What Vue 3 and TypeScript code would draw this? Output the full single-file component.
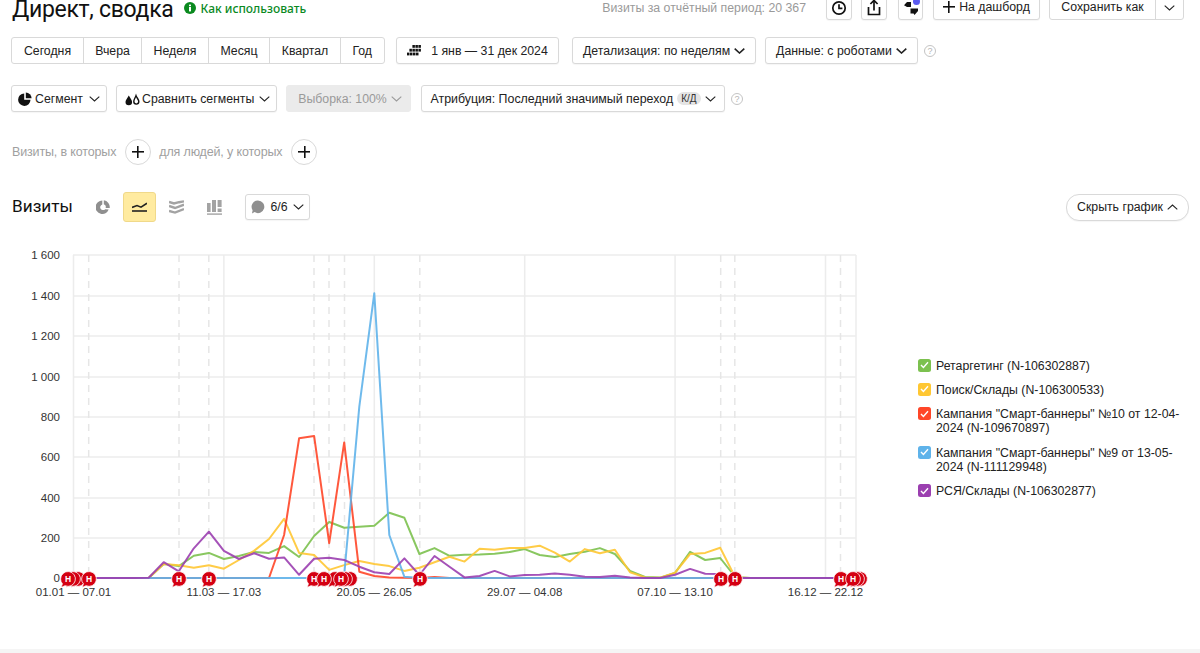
<script setup lang="ts">
interface Series { name: string; color: string; start: number; values: number[] }

const tabs = ['Сегодня', 'Вчера', 'Неделя', 'Месяц', 'Квартал', 'Год']

const series: Series[] = [
  { name: 'Ретаргетинг (N-106302887)', color: '#7cc14f', start: 6, values: [69, 59, 110, 124, 94, 109, 129, 124, 158, 104, 208, 277, 249, 254, 259, 323, 298, 119, 148, 110, 115, 116, 120, 129, 143, 114, 104, 119, 130, 148, 119, 35, 5, 2, 25, 129, 89, 99, 5] },
  { name: 'Поиск/Склады (N-106300533)', color: '#ffc733', start: 6, values: [69, 63, 51, 63, 46, 89, 134, 193, 293, 124, 114, 40, 64, 84, 69, 59, 35, 51, 78, 105, 81, 145, 140, 148, 148, 160, 125, 81, 143, 122, 140, 28, 3, 1, 26, 119, 124, 150, 3] },
  { name: 'Кампания "Смарт-баннеры" №10 от 12-04-2024 (N-109670897)', color: '#ff4628', start: 13, values: [0, 213, 691, 703, 172, 671, 31, 10, 3, 1, 0, 5, 0] },
  { name: 'Кампания "Смарт-баннеры" №9 от 13-05-2024 (N-111129948)', color: '#5fb3ea', start: 18, values: [15, 848, 1409, 213, 6, 0] },
  { name: 'РСЯ/Склады (N-106302877)', color: '#9b3fb0', start: 5, values: [1, 78, 33, 147, 229, 134, 94, 122, 95, 102, 16, 95, 100, 89, 56, 28, 20, 97, 15, 109, 56, 3, 10, 35, 8, 15, 16, 23, 16, 6, 5, 11, 3, 0, 0, 16, 45, 21, 20, 0] },
]

const X0 = 73.5
const STEP = 15.04
const BASE = 578
const SCALE = 0.2021
const WEEKS = 53

function linePoints(s: Series): string {
  const pts: string[] = []
  for (let i = 0; i < WEEKS; i++) {
    const v = i >= s.start ? s.values[i - s.start] ?? 0 : 0
    pts.push(`${(X0 + STEP * i).toFixed(1)},${(BASE - v * SCALE).toFixed(1)}`)
  }
  return pts.join(' ')
}

const yTicks = [
  { label: '1 600', y: 255 }, { label: '1 400', y: 296 }, { label: '1 200', y: 336 },
  { label: '1 000', y: 377 }, { label: '800', y: 417 }, { label: '600', y: 457 },
  { label: '400', y: 498 }, { label: '200', y: 538 }, { label: '0', y: 578 },
]
const xTicks = [
  { label: '01.01 — 07.01', x: 73.5 }, { label: '11.03 — 17.03', x: 223.9 },
  { label: '20.05 — 26.05', x: 374.3 }, { label: '29.07 — 04.08', x: 524.7 },
  { label: '07.10 — 13.10', x: 675.1 }, { label: '16.12 — 22.12', x: 825.5 },
]
const dashed = [88.7, 179, 208.8, 314, 329, 344.5, 419.8, 720.7, 734.8, 840.5]
const pins = [860, 857, 350, 345, 335, 78, 73, 68, 89, 179, 209, 314, 324, 341, 420, 721, 735, 841, 853]
const labelled = new Set([68, 89, 179, 209, 314, 324, 341, 420, 721, 735, 841, 853])
</script>

<template>
  <div class="page">
    <header class="head">
      <div class="title-wrap">
        <h1 class="title">Директ, сводка</h1>
        <span class="how">
          <svg width="12" height="12" viewBox="0 0 12 12"><circle cx="6" cy="6" r="6" fill="#0b8a1f" /><rect x="5" y="5" width="2" height="4.4" fill="#fff" /><rect x="5" y="2.6" width="2" height="1.6" fill="#fff" /></svg>
          Как использовать
        </span>
      </div>
      <div class="head-right">
        <span class="period">Визиты за отчётный период: 20 367</span>
        <button class="btn square">
          <svg width="16" height="16" viewBox="0 0 16 16" fill="none" stroke="#111" stroke-width="1.7"><circle cx="8" cy="8" r="6.2" /><path d="M8 4.2V8.4H11.4" /></svg>
        </button>
        <button class="btn square">
          <svg width="14" height="17" viewBox="0 0 14 17" fill="none" stroke="#111" stroke-width="1.7"><path d="M1.5 8V15.5H12.5V8" /><path d="M7 11.5V1.8" /><path d="M3.4 5L7 1.4L10.6 5" /></svg>
        </button>
        <button class="btn square chat">
          <svg width="14" height="14" viewBox="0 0 14 14" fill="#111"><path d="M0 4.2 L3 1 H7 V6 H3 Z" /><path d="M6.5 7.5 H14 V10 L10.5 14 L9.6 12.4 H6.5 Z" /></svg>
          <i class="dot"></i>
        </button>
        <button class="btn dash"><span class="plus-mark"></span>На дашборд</button>
        <div class="group save">
          <button class="seg save-main">Сохранить как</button>
          <button class="seg save-arrow"><svg class="chev" width="11" height="6" viewBox="0 0 11 6"><path d="M.7.7 5.5 5 10.3.7" /></svg></button>
        </div>
      </div>
    </header>

    <section class="row row-one">
      <div class="group tabs">
        <button v-for="t in tabs" :key="t" class="seg">{{ t }}</button>
      </div>
      <button class="btn date">
        <svg width="14" height="11" viewBox="0 0 14 11" fill="#111"><rect x="5.4" y="0" width="2.5" height="2.8" /><rect x="8.4" y="0" width="2.5" height="2.8" /><rect x="11.4" y="0" width="2.5" height="2.8" /><rect x="2.4" y="3.8" width="2.5" height="2.8" /><rect x="5.4" y="3.8" width="2.5" height="2.8" /><rect x="8.4" y="3.8" width="2.5" height="2.8" /><rect x="11.4" y="3.8" width="2.5" height="2.8" /><rect x="0" y="7.6" width="2.5" height="2.8" /><rect x="3" y="7.6" width="2.5" height="2.8" /><rect x="6" y="7.6" width="2.5" height="2.8" /><rect x="9" y="7.6" width="2.5" height="2.8" /></svg>
        <span>1 янв — 31 дек 2024</span>
      </button>
      <button class="btn detail">Детализация: по неделям <svg class="chev strong" width="11" height="6" viewBox="0 0 11 6"><path d="M.7.7 5.5 5 10.3.7" /></svg></button>
      <button class="btn data">Данные: с роботами <svg class="chev strong" width="11" height="6" viewBox="0 0 11 6"><path d="M.7.7 5.5 5 10.3.7" /></svg></button>
      <span class="help">?</span>
    </section>

    <section class="row row-two">
      <button class="btn seg-btn">
        <svg width="14" height="14" viewBox="0 0 14 14" fill="#111"><path d="M6.2 1.5V7.8H12.5A6.2 6.2 0 1 1 6.2 1.5Z" /><path d="M7.8 0.4A6 6 0 0 1 13.6 6.2H7.8Z" /></svg>
        <span>Сегмент</span>
        <svg class="chev wide" width="11" height="6" viewBox="0 0 11 6"><path d="M.7.7 5.5 5 10.3.7" /></svg>
      </button>
      <button class="btn compare">
        <svg width="15" height="14" viewBox="0 0 15 14"><path d="M3.8 3.4 C2.5 6 .5 7.6 .5 10 A3.3 3.3 0 0 0 7.1 10 C7.1 7.6 5.1 6 3.8 3.4Z" fill="#111" /><path d="M11 3.6 C10.2 6 8.8 7.4 8.8 9.6 A2.5 2.5 0 0 0 13.8 9.6 C13.8 7.4 11.8 6 11 3.6Z" fill="#fff" stroke="#111" stroke-width="1.4" /></svg>
        <span>Сравнить сегменты</span>
        <svg class="chev wide" width="11" height="6" viewBox="0 0 11 6"><path d="M.7.7 5.5 5 10.3.7" /></svg>
      </button>
      <button class="btn sample">Выборка: 100% <svg class="chev grey" width="11" height="6" viewBox="0 0 11 6"><path d="M.7.7 5.5 5 10.3.7" /></svg></button>
      <button class="btn attr"><span class="attr-text">Атрибуция: Последний значимый переход</span> <span class="kd">К/Д</span> <svg class="chev" width="11" height="6" viewBox="0 0 11 6"><path d="M.7.7 5.5 5 10.3.7" /></svg></button>
      <span class="help">?</span>
    </section>

    <section class="row row-three">
      <span class="cond">Визиты, в которых</span>
      <button class="round"><span class="plus-mark"></span></button>
      <span class="cond second">для людей, у которых</span>
      <button class="round"><span class="plus-mark"></span></button>
    </section>

    <section class="row row-four">
      <h2 class="metric">Визиты</h2>
      <div class="types">
        <span class="type">
          <svg width="14" height="14" viewBox="0 0 14 14" fill="#8f8f8f"><path d="M7.8 0.3A6.8 6.8 0 0 1 13.7 8H9.6A2.9 2.9 0 0 0 7.8 4.3Z" /><path d="M6.3 0.4V4.4A2.9 2.9 0 1 0 9.2 9.2L12.7 9.6A6.8 6.8 0 1 1 6.3 .4Z" /></svg>
        </span>
        <span class="type active">
          <svg width="15" height="10" viewBox="0 0 15 10" fill="none" stroke="#222" stroke-width="1.6"><path d="M0 5.4 L5 3.6 L9 5.2 L15 1.2" /><path d="M0 9H15" /></svg>
        </span>
        <span class="type">
          <svg width="15" height="14" viewBox="0 0 15 14" fill="none" stroke="#a3a3a3" stroke-width="2.4"><path d="M0 2 L5 3.5 L10 2.2 L15 1.4" /><path d="M0 6 L6 8 L15 4.6" /><path d="M0 11 L6 12.6 L15 9" /></svg>
        </span>
        <span class="type shifted">
          <svg width="15" height="15" viewBox="0 0 15 15" fill="#a3a3a3"><rect x="0" y="3" width="3.6" height="9" /><rect x="5" y="0" width="4" height="12" /><rect x="10.6" y="0" width="4" height="7" /><rect x="10.6" y="8.5" width="4" height="3.5" /><rect x="0" y="13.4" width="15" height="1.4" /></svg>
        </span>
      </div>
      <button class="btn notes">
        <svg width="14" height="14" viewBox="0 0 14 14" fill="#8f8f8f"><path d="M7 .5A6.3 6.3 0 1 1 3.6 12.1L1 13.5 1.6 10.2A6.3 6.3 0 0 1 7 .5Z" /></svg>
        6/6 <svg class="chev" width="11" height="6" viewBox="0 0 11 6"><path d="M.7.7 5.5 5 10.3.7" /></svg>
      </button>
      <button class="btn hide">Скрыть график <svg class="chev" width="11" height="6" viewBox="0 0 11 6"><path d="M.7 5.3 5.5 1 10.3 5.3" /></svg></button>
    </section>

    <section class="chart-row">
      <svg class="chart" width="900" height="380" viewBox="0 240 900 380">
        <g class="grid">
          <line v-for="t in yTicks" :key="t.label" x1="73" x2="856" :y1="t.y" :y2="t.y" />
          <line v-for="t in xTicks" :key="t.x" :x1="t.x" :x2="t.x" y1="255" y2="578" />
          <line x1="856" x2="856" y1="255" y2="578" />
        </g>
        <line v-for="d in dashed" :key="d" class="dash-line" :x1="d" :x2="d" y1="255" y2="578" />
        <text v-for="t in yTicks" :key="t.label" class="axis" x="60" :y="t.y + 4" text-anchor="end">{{ t.label }}</text>
        <text v-for="t in xTicks" :key="t.x" class="axis" :x="t.x" y="596" text-anchor="middle">{{ t.label }}</text>
        <polyline v-for="s in series" :key="s.name" class="line" :points="linePoints(s)" :stroke="s.color" />
        <g v-for="p in pins" :key="p" :transform="`translate(${p} 579)`">
          <path class="pin" d="M-7.4 0A7.4 7.4 0 1 1 -3 6.7L-7 8.6 -5.6 4.8A7.4 7.4 0 0 1 -7.4 0Z" />
          <text v-if="labelled.has(p)" class="pin-text" x="0" y="3" text-anchor="middle">Н</text>
        </g>
      </svg>
      <ul class="legend">
        <li v-for="s in series" :key="s.name">
          <span class="check" :style="{ background: s.color }">
            <svg width="9" height="8" viewBox="0 0 9 8" fill="none" stroke="#fff" stroke-width="1.4"><path d="M1 4 3.4 6.4 8 1.2" /></svg>
          </span>
          <span class="legend-name">{{ s.name }}</span>
        </li>
      </ul>
    </section>

    <div class="foot"></div>
  </div>
</template>

<style>
html, body { margin: 0; background: #fff; }
</style>

<style scoped>
.page {
  position: relative;
  height: 653px;
  overflow: hidden;
  font-family: "Liberation Sans", Arial, sans-serif;
  font-size: 12.3px;
  color: #222;
  background: #fff;
}
button { font: inherit; color: inherit; cursor: pointer; margin: 0; }
.head {
  display: flex;
  justify-content: space-between;
  height: 27px;
  margin-top: -7px;
  padding: 0 16px 0 12px;
}
.title-wrap { display: flex; align-items: flex-start; }
.title {
  margin: 3px 0 0;
  font-family: Roboto, sans-serif;
  font-size: 23px;
  font-weight: 400;
  line-height: 27px;
  letter-spacing: -.3px;
  color: #111;
}
.how {
  display: flex;
  align-items: center;
  gap: 5px;
  margin: 7px 0 0 10px;
  height: 16px;
  font-family: "Noto Sans", sans-serif;
  font-size: 12px;
  font-weight: 500;
  color: #0b8a1f;
}
.head-right { display: flex; align-items: center; }
.period { color: #9a9a9a; margin-right: 20px; position: relative; top: 1px; }
.btn {
  display: inline-flex;
  align-items: center;
  justify-content: center;
  height: 27px;
  box-sizing: border-box;
  padding: 0 11px;
  border: 1px solid #d9d9d9;
  border-radius: 3px;
  background: #fff;
  white-space: nowrap;
  box-shadow: 0 1px 1px rgba(0, 0, 0, .04);
}
.square { width: 26px; padding: 0; margin-right: 9px; position: relative; }
.square svg { position: relative; top: 1px; }
.chat { margin-left: 2px; width: 25px; }
.dot {
  position: absolute;
  top: 4px;
  right: 2px;
  width: 7px;
  height: 7px;
  border-radius: 50%;
  background: #5b5bf0;
}
.dash { width: 107px; margin-left: 1px; gap: 4px; padding: 0; }
.plus-mark {
  display: inline-block;
  position: relative;
  width: 12px;
  height: 12px;
  background:
    linear-gradient(#111, #111) center / 100% 1.6px no-repeat,
    linear-gradient(#111, #111) center / 1.6px 100% no-repeat;
}
.group {
  display: inline-flex;
  height: 27px;
  box-sizing: border-box;
  border: 1px solid #d9d9d9;
  border-radius: 3px;
  background: #fff;
}
.seg {
  border: 0;
  border-left: 1px solid #d9d9d9;
  background: transparent;
  padding: 0 11.5px;
  height: 25px;
  white-space: nowrap;
}
.seg:first-child { border-left: 0; }
.save { margin-left: 9px; width: 135px; }
.save-main { width: 105px; padding: 0; }
.save-arrow { flex: 1; padding: 0; }
.row { display: flex; align-items: center; padding: 0 11px; }
.row-one { margin-top: 17px; }
.tabs { width: 373.5px; }
.tabs .seg { padding: 0; flex: auto; }
.tabs .seg:nth-child(1) { width: 71px; flex: none; }
.tabs .seg:nth-child(2) { width: 58px; flex: none; }
.tabs .seg:nth-child(3) { width: 67px; flex: none; }
.tabs .seg:nth-child(4) { width: 61px; flex: none; }
.tabs .seg:nth-child(5) { width: 71px; flex: none; }
.date { width: 163px; margin-left: 11.5px; gap: 10px; padding: 0; }
.detail { width: 184px; margin-left: 13px; gap: 4px; padding: 0; }
.data { width: 153px; margin-left: 9px; gap: 4px; padding: 0; }
.help {
  display: inline-flex;
  align-items: center;
  justify-content: center;
  box-sizing: border-box;
  width: 12px;
  height: 12px;
  margin-left: 6px;
  border: 1px solid #c4c4c4;
  border-radius: 50%;
  font-size: 9px;
  color: #b5b5b5;
}
.row-two { margin-top: 21px; }
.seg-btn { width: 96px; gap: 3px; padding: 0 0 0 6px; justify-content: flex-start; }
.compare { width: 161px; margin-left: 9px; gap: 2px; padding: 0 0 0 8px; justify-content: flex-start; }
.chev.wide { margin-left: 3px; }
.sample {
  width: 125px;
  margin-left: 9px;
  gap: 4px;
  padding: 0 0 0 3px;
  border-color: #ebebeb;
  background: #ebebeb;
  color: #9a9a9a;
  box-shadow: none;
}
.attr { width: 304px; margin-left: 10px; gap: 4px; padding: 0; }
.attr-text { font-size: 12.4px; }
.kd {
  padding: 1px 4px;
  border-radius: 8px;
  background: #e4e4e4;
  font-size: 10px;
  color: #333;
}
.row-three { margin-top: 27px; height: 26px; padding-left: 12px; }
.cond { color: #9f9f9f; font-size: 12.5px; letter-spacing: -.15px; }
.round {
  display: flex;
  align-items: center;
  justify-content: center;
  width: 26px;
  height: 26px;
  margin-left: 9px;
  padding: 0;
  border: 1px solid #d9d9d9;
  border-radius: 50%;
  background: #fff;
}
.second { margin-left: 8px; }
.row-four { margin-top: 27px; height: 30px; position: relative; padding-left: 12px; }
.metric {
  margin: -2px 0 0;
  width: 75px;
  font-family: Roboto, sans-serif;
  font-size: 17.2px;
  font-weight: 400;
  color: #111;
}
.types { display: flex; margin-left: -1px; }
.type {
  display: flex;
  align-items: center;
  justify-content: center;
  width: 33px;
  height: 30px;
  margin-right: 4px;
  box-sizing: border-box;
  border-radius: 3px;
}
.type.shifted svg { position: relative; left: 1px; }
.active { background: #ffeba0; border: 1px solid #f0d98a; }
.notes { width: 65px; height: 26px; margin-left: 11px; gap: 5px; padding: 0; }
.hide {
  width: 123px;
  margin-left: auto;
  gap: 4px;
  padding: 0;
  border-radius: 13px;
}
.chev { fill: none; stroke: #222; stroke-width: 1.1; flex: none; }
.chev.strong { stroke-width: 1.6; }
.chev.grey { stroke: #9a9a9a; }
.chart-row { display: flex; margin-top: 18px; }
.chart { display: block; flex: none; width: 900px; height: 380px; }
.grid line { stroke: #ececec; stroke-width: 1.5; }
.dash-line { stroke: #e6e6e6; stroke-width: 1.5; stroke-dasharray: 7 6; }
.axis { font-family: "Liberation Sans", Arial, sans-serif; font-size: 11.5px; fill: #333; }
.line { fill: none; stroke-width: 2; stroke-linejoin: round; opacity: .9; }
.pin { fill: #d40012; stroke: #fff; stroke-width: .8; }
.pin-text { font-family: "Liberation Sans", Arial, sans-serif; font-size: 8.5px; font-weight: 700; fill: #fff; }
.legend {
  list-style: none;
  margin: 118.5px 0 0 18px;
  padding: 0;
  width: 264px;
}
.legend li { display: flex; margin-bottom: 10.4px; line-height: 14px; font-size: 12.3px; color: #222; }
.check {
  display: flex;
  flex: none;
  align-items: center;
  justify-content: center;
  width: 13px;
  height: 13px;
  margin-right: 5px;
  border-radius: 2.5px;
}
.foot {
  position: absolute;
  left: 0;
  right: 0;
  bottom: 0;
  height: 4px;
  background: #f5f5f5;
}
</style>
